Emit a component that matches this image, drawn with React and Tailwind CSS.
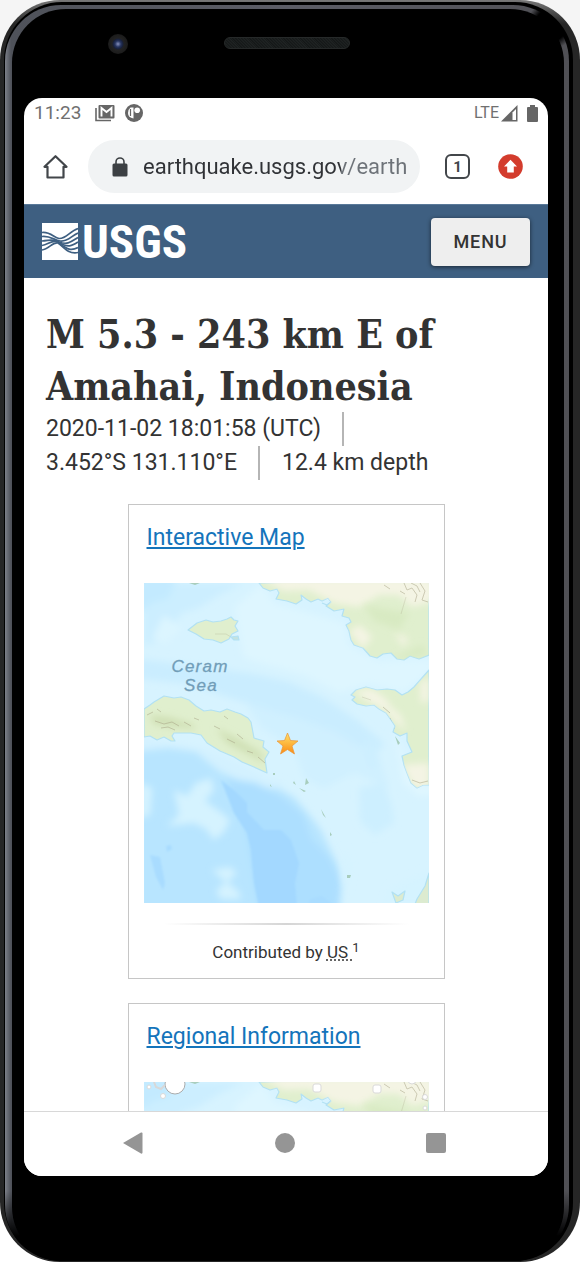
const EAST = "M285 87 270 104 264 109 258 112 251 107 243 106 233 107 222 104 212 107 207 112 211 114 208 117 213 121 222 123 230 122 235 126 242 130 247 137 251 143 249 149 256 153 263 150 263 158 268 169 258 173 260 182 263 190 267 200 273 205 279 202 285 202Z";
const NORTH = "M115 0 119 5 126 8 133 6 135 10 132 16 143 18 152 21 158 17 157 12 162 16 167 19 174 16 178 18 184 15 187 19 182 23 190 28 200 26 198 33 205 35 207 39 202 42 205 48 207 57 210 62 219 65 226 73 233 75 239 71 247 70 253 76 260 77 266 73 275 76 285 72 285 0Z";
const SERAM = "M0 126 6 122 10 119 20 113 30 115 37 114 45 117 52 123 60 128 67 127 76 129 83 126 91 129 97 131 104 135 107 139 110 155 120 158 119 164 125 169 121 176 123 190 110 184 98 179 90 174 76 168 63 160 57 152 47 150 30 150 28 153 31 158 27 158 20 154 13 157 6 153 0 154Z";
const ISLE = "M44 47 53 40 62 37 69 39 77 38 83 36 87 34 90 37 94 38 91 43 94 48 88 51 85 56 77 60 69 57 60 56 52 51Z";

function MapTile({ id, height, className, children }) {
  const water = `${id}-soft`;
  const land = `${id}-land`;
  return (
    <svg
      viewBox={`0 0 285 ${height}`}
      preserveAspectRatio="xMidYMin slice"
      className={className}
      role="img"
      aria-label="Map of the Ceram Sea"
    >
      <defs>
        <filter id={water} x="-20%" y="-20%" width="140%" height="140%">
          <feGaussianBlur stdDeviation="3.5" />
        </filter>
        <filter id={`${id}-edge`}>
          <feGaussianBlur stdDeviation="1" />
        </filter>
        <clipPath id={land}>
          <path d={NORTH} />
          <path d={EAST} />
          <path d={SERAM} />
          <path d={ISLE} />
        </clipPath>
        <linearGradient id={`${id}-star`} x1="0" y1="0" x2="0" y2="1">
          <stop offset="0" stopColor="#ffe36a" />
          <stop offset="1" stopColor="#fb8b13" />
        </linearGradient>
      </defs>
      <rect width="285" height="320" fill="#d7f3ff" />
      <g filter={`url(#${water})`}>
        <path d="M0 0H100L75 12 55 25 38 30 25 48 12 60 0 62Z" fill="#cceeff" />
        <path d="M-5 -5H32L25 15 8 20 -5 30Z" fill="#c3eaff" />
        <path d="M20 32 38 45 22 60 8 56Z" fill="#dcf5ff" />
        <path d="M-5 76 30 80 70 85 110 91 145 99 180 115 213 137 240 160 232 172 205 158 175 143 145 133 118 125 80 113 45 101 -5 96Z" fill="#caedff" />
        <path d="M100 118 150 135 190 148 235 175 245 205 210 190 180 205 160 195 150 165 118 145Z" fill="#d0f0ff" />
        <path d="M118 0 130 20 200 40 205 62 235 78 290 76V86L260 110 225 101 195 110 160 92 100 75 90 25Z" fill="#def6ff" />
        <path d="M-5 160 35 162 60 167 82 185 123 199 150 214 168 235 177 247 190 274 198 290 195 328H-5Z" fill="#b8e5ff" />
        <path d="M-5 154 28 160 60 165 95 180 123 194 145 203 130 206 100 200 75 188 52 169 25 165 -5 168Z" fill="#d3f1ff" />
        <path d="M82 195 112 200 138 214 159 231 168 256 187 276 198 300 195 328H115L103 250Z" fill="#addfff" />
        <path d="M215 205 240 200 248 223 250 240 231 252 216 238Z M218 160 231 157 236 185 224 184Z" fill="#cdefff" />
        <path d="M248 145 256 175 259 199 275 213 290 211V203L272 201 263 178Z" fill="#e0f7ff" />
      </g>
      <g filter={`url(#${id}-edge)`}>
        <path d="M77 197 90 230 103 250 107 267 108 280 110 300 115 324H153L151 300 155 280 147 257 137 247 120 247 103 229 103 220 90 207Z" fill="#a3d8ff" />
        <path d="M6 272 16 274 21 300 19 307 12 294Z M22 263 27 262 28 266 23 269Z M166 316 178 313 190 322H164Z" fill="#a9dcff" />
      </g>
      <g fill="#d5f3ff" filter={`url(#${water})`}>
        <path d="M30 207 43 213 52 200 67 195 70 207 61 218 78 230 86 237 80 249 70 257 62 246 50 240 23 243 35 232Z" />
        <path d="M68 287 86 284 93 290 83 299 95 309 97 316 77 316 72 308 82 299Z" />
        <path d="M-4 200 8 205 6 232 -4 235Z M200 264 207 285 202 310 197 290Z M246 305 290 285V324H240Z" />
      </g>
      <g fill="#e0efce" stroke="#b2e1f3" strokeWidth="1.2" strokeLinejoin="round">
        <path d={NORTH} />
        <path d={EAST} />
        <path d={SERAM} />
        <path d={ISLE} />
        <path d="M178 20 183 22 187 19" fill="none" />
        <path d="M87 54 94 53 95 57 90 57Z" fill="#c4e3e0" />
        <path d="M285 290 281 303 273 316 271 321H285Z M248 309 254 313 261 308 259 317 252 320Z" fill="#dcebd0" />
      </g>
      <g clipPath={`url(#${land})`}>
        <g filter={`url(#${water})`} fill="#f4f4e4">
          <path d="M115 -5H290V18L268 24 255 12 235 12 215 24 190 20 165 7 140 8Z" />
          <path d="M209 108 228 106 242 116 247 124 257 133 262 148 252 139 241 127 225 119Z" />
          <path d="M258 182 285 180V205H270Z M276 100 285 94V118L277 120Z" />
          <path d="M205 48 216 42 228 54 219 66Z M250 50 264 55 260 64Z" />
        </g>
        <g filter={`url(#${water})`} fill="#cfdfb4">
          <path d="M5 132 24 134 48 141 52 146 27 144 10 141Z M72 145 94 156 116 169 122 180 106 172 83 160Z" />
          <path d="M220 22 265 30 255 47 230 38Z M245 78 278 62 284 71 265 75Z" fill="#d8eac2" />
        </g>
        <g stroke="#a5a083" strokeWidth="1" fill="none" opacity=".5">
          <path d="M3 132 9 129M11 138 20 141 28 139 35 143M17 145 24 144 31 147M40 139 47 143M50 135 55 137M70 143 76 146M83 156 91 160M93 151 99 156M103 168 109 170M114 174 121 180M13 126 17 129M80 133 84 136" />
          <path d="M260 0 263 7 268 5 273 12 271 19M267 0 273 3 276 9M276 0 281 8 278 17 284 19M256 8 261 11M239 124 246 130M246 135 250 146M268 197 276 200 284 198M240 2 246 6" />
          <path d="M262 14 257 31M218 114 227 117M71 51H82L87 54" opacity=".5" />
        </g>
      </g>
      <g fill="#a8cdbd">
        <path d="M126 201 128 204 126 203Z M150 198 152 202 149 200Z M162 195 165 200 161 202Z M155 205 162 208 160 209Z M177 226 182 235 179 232Z M186 249 188 252 186 253Z M203 292 207 292 206 295 203 295Z M129 190 131 190 131 192 129 192Z M251 153 256 160 254 162Z M45 0H56L51 2Z" />
      </g>
      {children}
    </svg>
  );
}

function Card({ title, children }) {
  return (
    <section className="w-[317px] border border-[#c6c6c6] bg-white px-[15px]">
      <h2 className="flex h-[78px] items-start px-[3px] pt-[17px]">
        <a href="#" className="text-[23px] leading-8 text-[#1474bb] underline decoration-2 underline-offset-2">
          {title}
        </a>
      </h2>
      {children}
    </section>
  );
}

function StatusBar() {
  return (
    <div className="flex h-[30px] items-center justify-between px-[10px] text-[#707070]">
      <div className="flex items-center">
        <span className="text-[19px] leading-6">11:23</span>
        <svg viewBox="0 0 20 18" className="ml-[14px] h-[18px] w-5" aria-hidden="true">
          <path d="M1 4V16.500H16" fill="none" stroke="#666" strokeWidth="1.600" />
          <rect x="3.500" y="1" width="16" height="13.500" rx="1" fill="#666" />
          <path d="M6.500 12.500V4L11.500 8 16.500 4V12.500" fill="none" stroke="#fff" strokeWidth="1.900" />
        </svg>
        <svg viewBox="0 0 18 18" className="ml-[10px] size-[18px]" aria-hidden="true">
          <circle cx="9" cy="9" r="9" fill="#666" />
          <path d="M5.500 3.500H8.500V14.500Q3 13.500 3 9 3 5.500 5.500 3.500Z" fill="#fff" />
          <path d="M5.500 5V12" stroke="#666" strokeWidth="1.200" />
          <circle cx="12.200" cy="6.200" r="2.800" fill="#fff" />
        </svg>
      </div>
      <div className="flex items-center">
        <span className="text-[16px] leading-6">LTE</span>
        <svg viewBox="0 0 17 17" className="ml-[2px] size-[17px]" aria-hidden="true">
          <path d="M0 16.5 16.5 0V16.5Z" fill="#666" />
          <path d="M11.5 7.5 15 4V15H11.5Z" fill="#fff" />
        </svg>
        <svg viewBox="0 0 11 17" className="ml-[9px] h-[17px] w-[11px]" aria-hidden="true">
          <path d="M3 0H8V2H10Q11 2 11 3V16Q11 17 10 17H1Q0 17 0 16V3Q0 2 1 2H3Z" fill="#666" />
        </svg>
      </div>
    </div>
  );
}

function Toolbar() {
  return (
    <div className="flex items-center pt-3 pr-[25px] pb-[11px] pl-[18px]">
      <button type="button" aria-label="Home">
        <svg viewBox="0 0 26 26" className="size-[26px]" fill="none" stroke="#42464a" strokeWidth="2.2" strokeLinejoin="round">
          <path d="M2.500 12.800 13.500 2.200 24.500 12.800H21.500V23.500H5.500V12.800Z" />
        </svg>
      </button>
      <label className="ml-5 flex h-[53px] min-w-0 flex-1 items-center rounded-full bg-[#f1f3f4] pr-3 pl-6">
        <svg viewBox="0 0 16 20" className="h-5 w-4 shrink-0" aria-hidden="true">
          <rect x="0.500" y="6.500" width="15" height="13" rx="1.5" fill="#3c4043" />
          <path d="M4 8V5A4 4 0 0 1 12 5V8" fill="none" stroke="#3c4043" strokeWidth="1.6" />
        </svg>
        <input
          type="text"
          aria-label="Address"
          defaultValue="earthquake.usgs.gov/earthquakes/eventpage"
          className="ml-[15px] w-0 flex-1 bg-[linear-gradient(90deg,#303236_198px,#6d7278_198px)] bg-clip-text text-[22px] leading-8 text-transparent outline-none"
        />
      </label>
      <button type="button" aria-label="Tabs" className="ml-[25px] flex size-[25px] items-center justify-center rounded-[6px] border-2 border-[#42464a] text-[15px] leading-4 font-bold text-[#42464a]">
        1
      </button>
      <button type="button" aria-label="Update available" className="ml-[28px]">
        <svg viewBox="0 0 25 25" className="size-[25px]">
          <circle cx="12.5" cy="12.5" r="12.3" fill="#d33c2d" />
          <path d="M12.5 5.8 19 12.4H15.8V18.4H9.2V12.4H6Z" fill="#fff" />
        </svg>
      </button>
    </div>
  );
}

function SiteHeader() {
  return (
    <header className="flex h-[74px] items-center justify-between border-t border-[#597999] bg-[#3e5f81] px-[18px]">
      <a href="#" aria-label="USGS home" className="flex items-center gap-1 text-white">
        <svg viewBox="0 0 36 37" className="h-[37px] w-9" aria-hidden="true">
          <path d="M0 0H36V37H0Z" fill="#fff" />
          <g fill="none" stroke="#3e5f81" strokeWidth="1.700">
            <path d="M0 9.500C8 8.500 12 14.500 17 15.500 24 16 28 8 36 5.500" />
            <path d="M0 13.500C8 12.500 12 17 18 18 26 19 29 13 36 10" />
            <path d="M0 18C8 17.500 11 15.500 17 19 26 22.500 30 18 36 14.500" />
            <path d="M0 22.500C6 22 11 15.500 17 19.500 26 25 30 23 36 19" />
            <path d="M0 27C7 26 11 18.500 16 20 24 25 28 29 36 24.500" />
            <path d="M17 20.500C24 27 28 31 36 29.500" />
          </g>
        </svg>
        <span className="font-['Liberation_Sans_Narrow','Roboto_Condensed','Liberation_Sans',sans-serif] text-[47px] leading-[44px] font-bold">USGS</span>
      </a>
      <button type="button" className="h-12 w-[99px] rounded-[4px] bg-[#eee] text-[18px] leading-6 font-medium tracking-wider text-[#333] shadow-[0_1px_4px_rgba(0,0,0,0.6)]">
        MENU
      </button>
    </header>
  );
}

function NavBar() {
  return (
    <nav className="grid h-[65px] grid-cols-[1fr_130px_1fr] items-center border-t border-[#d8d8d8] bg-white pr-[102px] pb-[2px] pl-[99px] text-[#959595]">
      <button type="button" aria-label="Back">
        <svg viewBox="0 0 20 22" className="h-[22px] w-5" fill="currentColor">
          <path d="M0 11 18 .5Q19.500 0 19.500 1.500V20.500Q19.500 22 18 21.500Z" />
        </svg>
      </button>
      <button type="button" aria-label="Home screen" className="size-5 justify-self-center rounded-full bg-[#959595]" />
      <button type="button" aria-label="Recent apps" className="size-5 justify-self-end rounded-[2px] bg-[#959595]" />
    </nav>
  );
}

export default function App() {
  return (
    <div className="bg-[linear-gradient(#f5f5f5_50%,#fff_50%)] font-[Roboto,sans-serif]">
      <div className="rounded-[60px] bg-[linear-gradient(#777_0px,#262626_24px)] pt-[2px] pr-[7px] pb-px pl-1">
        <div className="rounded-[58px] bg-black pt-[3px] pr-1 pl-px">
          <div className="rounded-[56px] bg-[radial-gradient(circle_at_calc(100%_-_18px)_20px,#000_16px,transparent_24px),linear-gradient(transparent_calc(100%_-_70px),#000_calc(100%_-_25px)),linear-gradient(90deg,#7c7f88_0px,#4f525a_6px,#5c5d66_50%,#505055_100%)] pt-1 pr-[5px] pl-[7px]">
            <div className="rounded-[54px] bg-black pr-4 pb-[85px] pl-3">
              <div className="relative flex h-[89px] items-start justify-center pt-[28px]">
                <span className="absolute top-[25px] left-[84px] size-5 rounded-full bg-[radial-gradient(circle,#8791bd_0px,#26345f_3px,#182039_5px,#222_6px,#1b1b1b_10px)]" />
                <span className="ml-[2px] h-3 w-[126px] rounded-full border border-[#262929] bg-[repeating-linear-gradient(45deg,#141717_0px,#202424_2px)]" />
              </div>
              <div className="overflow-hidden rounded-[18px] bg-white">
                <StatusBar />
                <Toolbar />
                <SiteHeader />
                <main className="px-[22px] pt-[30px] text-[#333]">
                  <h1 className="font-['DejaVu_Serif_Condensed','DejaVu_Serif',serif] text-[39px] leading-[52px] font-bold">
                    M 5.3 - 243 km E of<br />Amahai, Indonesia
                  </h1>
                  <ul className="flex flex-wrap text-[23px] leading-[34px]">
                    <li className="mr-[22px] border-r-2 border-[#b5b5b5] pr-[21px]">2020-11-02 18:01:58 (UTC)</li>
                    <li className="mr-[22px] border-r-2 border-[#b5b5b5] pr-[21px]">3.452°S 131.110°E</li>
                    <li>12.4 km depth</li>
                  </ul>
                  <div className="mt-[24px] flex flex-col items-center gap-6">
                    <Card title="Interactive Map">
                      <MapTile id="event" height={320} className="block h-auto w-full">
                        <g fill="#719db8" fontFamily="Liberation Sans" fontStyle="italic" fontSize="17" letterSpacing="1.2" textAnchor="middle" stroke="#719db8" strokeWidth=".3">
                          <text x="56" y="89">Ceram</text>
                          <text x="57" y="108">Sea</text>
                        </g>
                        <path d="M143.500 150 146.500 157.500 154 158 148 163 150.500 171 143.500 166.500 136.500 171 139 163 133 158 140.500 157.500Z" fill="url(#event-star)" stroke="#e99435" strokeWidth=".7" />
                      </MapTile>
                      <div className="mx-5 mt-5 h-[2px] bg-[linear-gradient(90deg,transparent,#d5d5d5,transparent)]" />
                      <p className="pt-[13px] pb-3 text-center text-[17px] leading-7">
                        Contributed by{" "}
                        <abbr title="USGS National Earthquake Information Center" className="underline decoration-dotted underline-offset-2">US </abbr>{" "}
                        <sup className="text-[13px] leading-none">1</sup>
                      </p>
                    </Card>
                    <div className="h-[108px] overflow-hidden">
                      <Card title="Regional Information">
                        <MapTile id="region" height={320} className="block h-auto w-full">
                          <g fill="#fff" stroke="#d9d9d9" strokeWidth="1">
                            <circle cx="31" cy="2" r="10" stroke="#aaa" />
                            <circle cx="5" cy="5" r="2" />
                            <circle cx="19" cy="14" r="2.5" />
                            <rect x="169" y="2" width="8" height="8" rx="2" />
                            <rect x="229" y="3" width="8" height="8" rx="2" />
                            <circle cx="281" cy="15" r="2.500" />
                            <circle cx="281" cy="26" r="2" />
                            <circle cx="268" cy="-2" r="4" />
                          </g>
                          <path d="M10 0 12 5 17 7 21 3" fill="none" stroke="#d8d8d8" strokeWidth="2" />
                        </MapTile>
                      </Card>
                    </div>
                  </div>
                </main>
                <NavBar />
              </div>
            </div>
          </div>
        </div>
      </div>
    </div>
  );
}
